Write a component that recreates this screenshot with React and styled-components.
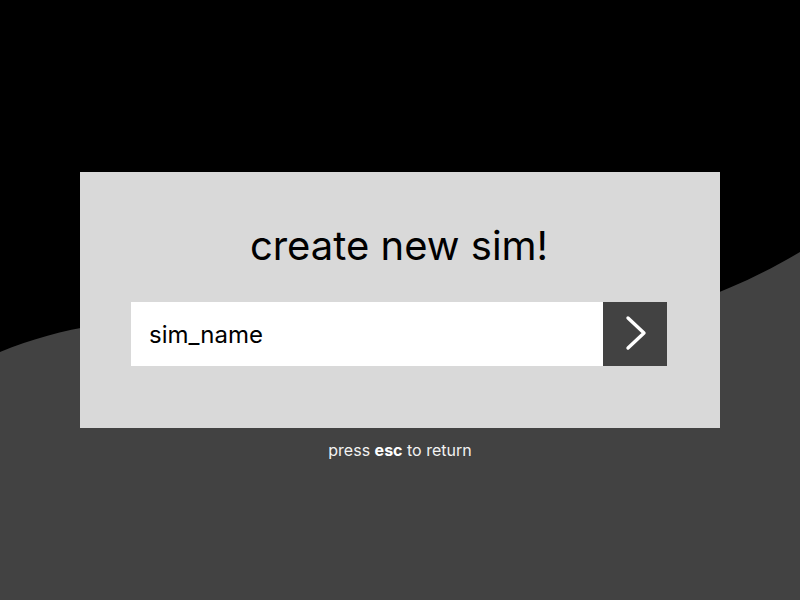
import React from "react";
import styled, { createGlobalStyle } from "styled-components";

const Global = createGlobalStyle`
  html, body { margin: 0; padding: 0; background: #000; }
  body { font-family: Inter, "Noto Sans", sans-serif; }
`;

const Page = styled.div`
  position: relative;
  width: 100%;
  height: 600px;
  overflow: hidden;
  background: #000;
  display: flex;
  flex-direction: column;
  align-items: center;
  padding-top: 172px;
  box-sizing: border-box;
`;

const Wave = styled.svg`
  position: absolute;
  inset: 0;
  width: 100%;
  height: 100%;
  z-index: 0;
`;

const Card = styled.div`
  position: relative;
  z-index: 1;
  width: 640px;
  height: 256px;
  box-sizing: border-box;
  background: #d9d9d9;
  display: flex;
  flex-direction: column;
  align-items: center;
  padding: 47px 53px 0 51px;
`;

const Title = styled.h1`
  margin: 0;
  font-size: 40px;
  font-weight: 400;
  line-height: 54px;
  color: #000;
`;

const Form = styled.div`
  margin-top: 29px;
  display: flex;
  width: 536px;
  height: 64px;
`;

const Input = styled.input`
  flex: 1;
  min-width: 0;
  border: none;
  outline: none;
  background: #fff;
  padding: 0 18px;
  font-family: Inter, "Noto Sans", sans-serif;
  font-size: 24px;
  color: #000;
`;

const Submit = styled.button`
  width: 64px;
  height: 64px;
  border: none;
  background: #424242;
  display: flex;
  align-items: center;
  justify-content: center;
  padding: 0;
  cursor: pointer;
`;

const Hint = styled.p`
  position: relative;
  z-index: 1;
  margin: 12px 0 0;
  font-size: 16px;
  line-height: 20px;
  color: #f2f2f2;
  b { font-weight: 700; color: #fff; }
`;

export default function App() {
  return (
    <>
      <Global />
      <Page>
        <Wave viewBox="0 0 800 600" preserveAspectRatio="none">
          <path
            d="M0 352 C 250 250, 500 430, 800 252 L 800 600 L 0 600 Z"
            fill="#424242"
          />
        </Wave>
        <Card>
          <Title>create new sim!</Title>
          <Form>
            <Input defaultValue="sim_name" />
            <Submit aria-label="submit">
              <svg width="64" height="64" viewBox="0 0 64 64">
                <path
                  d="M25 16 L41 31 L25 46"
                  fill="none"
                  stroke="#fff"
                  strokeWidth="3.4"
                  strokeLinecap="round"
                  strokeLinejoin="round"
                />
              </svg>
            </Submit>
          </Form>
        </Card>
        <Hint>
          press <b>esc</b> to return
        </Hint>
      </Page>
    </>
  );
}
